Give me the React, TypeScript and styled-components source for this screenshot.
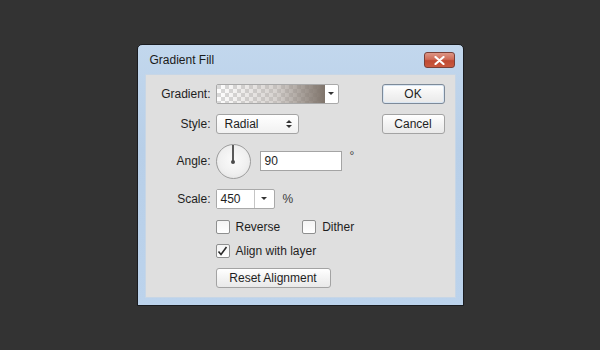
import React, { FC } from "react";
import styled, { createGlobalStyle } from "styled-components";

const GlobalStyle = createGlobalStyle`
  html, body {
    margin: 0;
    padding: 0;
    background: #333333;
  }
  body {
    font-family: "Liberation Sans", Arial, sans-serif;
    font-size: 12px;
    color: #1e1e1e;
  }
`;

const Screen = styled.div`
  width: 600px;
  height: 350px;
  display: flex;
  align-items: center;
  justify-content: center;
`;

const Window = styled.div`
  box-sizing: border-box;
  width: 327px;
  height: 262px;
  margin-top: -1px;
  border: 1px solid #1a1c20;
  border-radius: 5px 5px 0 0;
  background: linear-gradient(180deg, #c2d7ed 0%, #b8cfe8 40%, #bcd3ec 100%);
  display: flex;
  flex-direction: column;
  padding: 0 7px 7px 7px;
`;

const TitleBar = styled.div`
  height: 29px;
  display: flex;
  align-items: center;
  justify-content: space-between;
  padding-left: 5px;
`;

const Title = styled.span`
  font-size: 12px;
  color: #1a1a1a;
  margin-top: 2px;
`;

const CloseButton = styled.div`
  box-sizing: border-box;
  width: 31px;
  height: 16px;
  margin-top: 2px;
  margin-right: 1px;
  border: 1px solid #7a4038;
  border-radius: 3px;
  background: linear-gradient(180deg, #dd9585 0%, #cf6c58 45%, #bf4a33 55%, #c9593f 100%);
  display: flex;
  align-items: center;
  justify-content: center;
`;

const Panel = styled.div`
  flex: 1;
  background: #dfdfdf;
  border: 1px solid #c7d6e6;
  display: flex;
  padding: 9px 10px 0 4px;
`;

const Form = styled.div`
  flex: 1;
  display: flex;
  flex-direction: column;
`;

const Row = styled.div<{ $gap?: number }>`
  display: flex;
  align-items: center;
  margin-top: ${(p) => p.$gap ?? 0}px;
`;

const Label = styled.span`
  width: 61px;
  margin-right: 5px;
  text-align: right;
`;

const Indent = styled.div`
  width: 66px;
  flex: none;
`;

const Field = styled.div<{ $w: number }>`
  box-sizing: border-box;
  width: ${(p) => p.$w}px;
  height: 20px;
  border: 1px solid #a9a9a9;
  border-radius: 2px;
  background: #ffffff;
  display: flex;
  align-items: center;
`;

const Swatch = styled.div`
  flex: 1;
  height: 100%;
  background:
    linear-gradient(90deg, rgba(223, 223, 223, 0) 0%, rgba(180, 172, 166, 0.55) 55%, #7f746b 100%),
    repeating-conic-gradient(#ffffff 0% 25%, #d9d9d9 0% 50%) 0 0 / 8px 8px;
`;

const ArrowCell = styled.div<{ $border?: boolean; $w?: number }>`
  width: ${(p) => p.$w ?? 13}px;
  height: 100%;
  display: flex;
  align-items: center;
  justify-content: center;
  border-left: ${(p) => (p.$border ? "1px solid #c5c5c5" : "none")};
`;

const DownTri = styled.span`
  width: 0;
  height: 0;
  border-left: 3px solid transparent;
  border-right: 3px solid transparent;
  border-top: 3px solid #333;
`;

const Select = styled.div`
  box-sizing: border-box;
  width: 83px;
  height: 20px;
  border: 1px solid #a4a4a4;
  border-radius: 3px;
  background: linear-gradient(180deg, #ffffff 0%, #f1f1f1 100%);
  display: flex;
  align-items: center;
  justify-content: space-between;
  padding: 0 6px 0 8px;
`;

const UpDown = styled.span`
  display: flex;
  flex-direction: column;
  gap: 2px;
`;

const UpTri = styled.span`
  width: 0;
  height: 0;
  border-left: 3px solid transparent;
  border-right: 3px solid transparent;
  border-bottom: 3px solid #333;
`;

const Dial = styled.div`
  box-sizing: border-box;
  width: 35px;
  height: 35px;
  border-radius: 50%;
  border: 1px solid #9d9d9d;
  background: radial-gradient(circle at 50% 45%, #fbfbfb 0%, #f0f0f0 55%, #dedede 100%);
  display: flex;
  justify-content: center;
  margin-right: 9px;
`;

const Needle = styled.div`
  width: 2px;
  height: 17px;
  background: #5a5a5a;
  position: relative;
  &::after {
    content: "";
    position: absolute;
    left: -1px;
    bottom: -2px;
    width: 4px;
    height: 4px;
    border-radius: 50%;
    background: #4a4a4a;
  }
`;

const TextInput = styled.div<{ $w: number; $bare?: boolean }>`
  box-sizing: border-box;
  width: ${(p) => p.$w}px;
  height: ${(p) => (p.$bare ? "100%" : "20px")};
  border: ${(p) => (p.$bare ? "none" : "1px solid #a4a4a4")};
  background: #ffffff;
  padding-left: 4px;
  display: flex;
  align-items: center;
`;

const Unit = styled.span<{ $ml: number; $mt?: number }>`
  margin-left: ${(p) => p.$ml}px;
  margin-top: ${(p) => p.$mt ?? 0}px;
  align-self: ${(p) => (p.$mt ? "flex-start" : "center")};
  color: #3a3a3a;
`;

const Box = styled.span`
  box-sizing: border-box;
  width: 14px;
  height: 14px;
  border: 1px solid #8e8f8f;
  border-radius: 2px;
  background: linear-gradient(180deg, #f4f4f4 0%, #ffffff 100%);
  display: inline-flex;
  align-items: center;
  justify-content: center;
  margin-right: 6px;
`;

const Check = styled.label<{ $mr?: number }>`
  display: flex;
  align-items: center;
  margin-right: ${(p) => p.$mr ?? 0}px;
`;

const Button = styled.div<{ $w: number }>`
  box-sizing: border-box;
  width: ${(p) => p.$w}px;
  height: 20px;
  border: 1px solid #a3a3a3;
  border-radius: 3px;
  background: linear-gradient(180deg, #ffffff 0%, #f3f3f3 50%, #e9e9e9 100%);
  display: flex;
  align-items: center;
  justify-content: center;
`;

const DefaultButton = styled(Button)`
  border-color: #7d8a99;
  box-shadow: inset 0 0 0 1px #d9e6f3;
`;

const Buttons = styled.div`
  display: flex;
  flex-direction: column;
  gap: 10px;
`;

const CheckBox: FC<{ checked?: boolean; label: string; mr?: number }> = ({ checked, label, mr }) => (
  <Check $mr={mr}>
    <Box>
      {checked && (
        <svg width="11" height="10" viewBox="0 0 11 10">
          <path d="M1.5 5.5 L4 8.5 L9.5 1" fill="none" stroke="#2a2a2a" strokeWidth="1.6" />
        </svg>
      )}
    </Box>
    {label}
  </Check>
);

const App: FC = () => {
  return (
    <Screen>
      <GlobalStyle />
      <Window>
        <TitleBar>
          <Title>Gradient Fill</Title>
          <CloseButton>
            <svg width="11" height="9" viewBox="0 0 11 9">
              <path d="M1.5 1 L9.5 8 M9.5 1 L1.5 8" stroke="#ffffff" strokeWidth="2.2" strokeLinecap="round" />
            </svg>
          </CloseButton>
        </TitleBar>
        <Panel>
          <Form>
            <Row>
              <Label>Gradient:</Label>
              <Field $w={123}>
                <Swatch />
                <ArrowCell>
                  <DownTri />
                </ArrowCell>
              </Field>
            </Row>
            <Row $gap={10}>
              <Label>Style:</Label>
              <Select>
                Radial
                <UpDown>
                  <UpTri />
                  <DownTri />
                </UpDown>
              </Select>
            </Row>
            <Row $gap={10}>
              <Label>Angle:</Label>
              <Dial>
                <Needle />
              </Dial>
              <TextInput $w={82}>90</TextInput>
              <Unit $ml={8} $mt={5}>°</Unit>
            </Row>
            <Row $gap={10}>
              <Label>Scale:</Label>
              <Field $w={59}>
                <TextInput $w={38} $bare>450</TextInput>
                <ArrowCell $border $w={19}>
                  <DownTri />
                </ArrowCell>
              </Field>
              <Unit $ml={8}>%</Unit>
            </Row>
            <Row $gap={11}>
              <Indent />
              <CheckBox label="Reverse" mr={22} />
              <CheckBox label="Dither" />
            </Row>
            <Row $gap={10}>
              <Indent />
              <CheckBox checked label="Align with layer" />
            </Row>
            <Row $gap={10}>
              <Indent />
              <Button $w={115}>Reset Alignment</Button>
            </Row>
          </Form>
          <Buttons>
            <DefaultButton $w={63}>OK</DefaultButton>
            <Button $w={63}>Cancel</Button>
          </Buttons>
        </Panel>
      </Window>
    </Screen>
  );
};

export default App;
